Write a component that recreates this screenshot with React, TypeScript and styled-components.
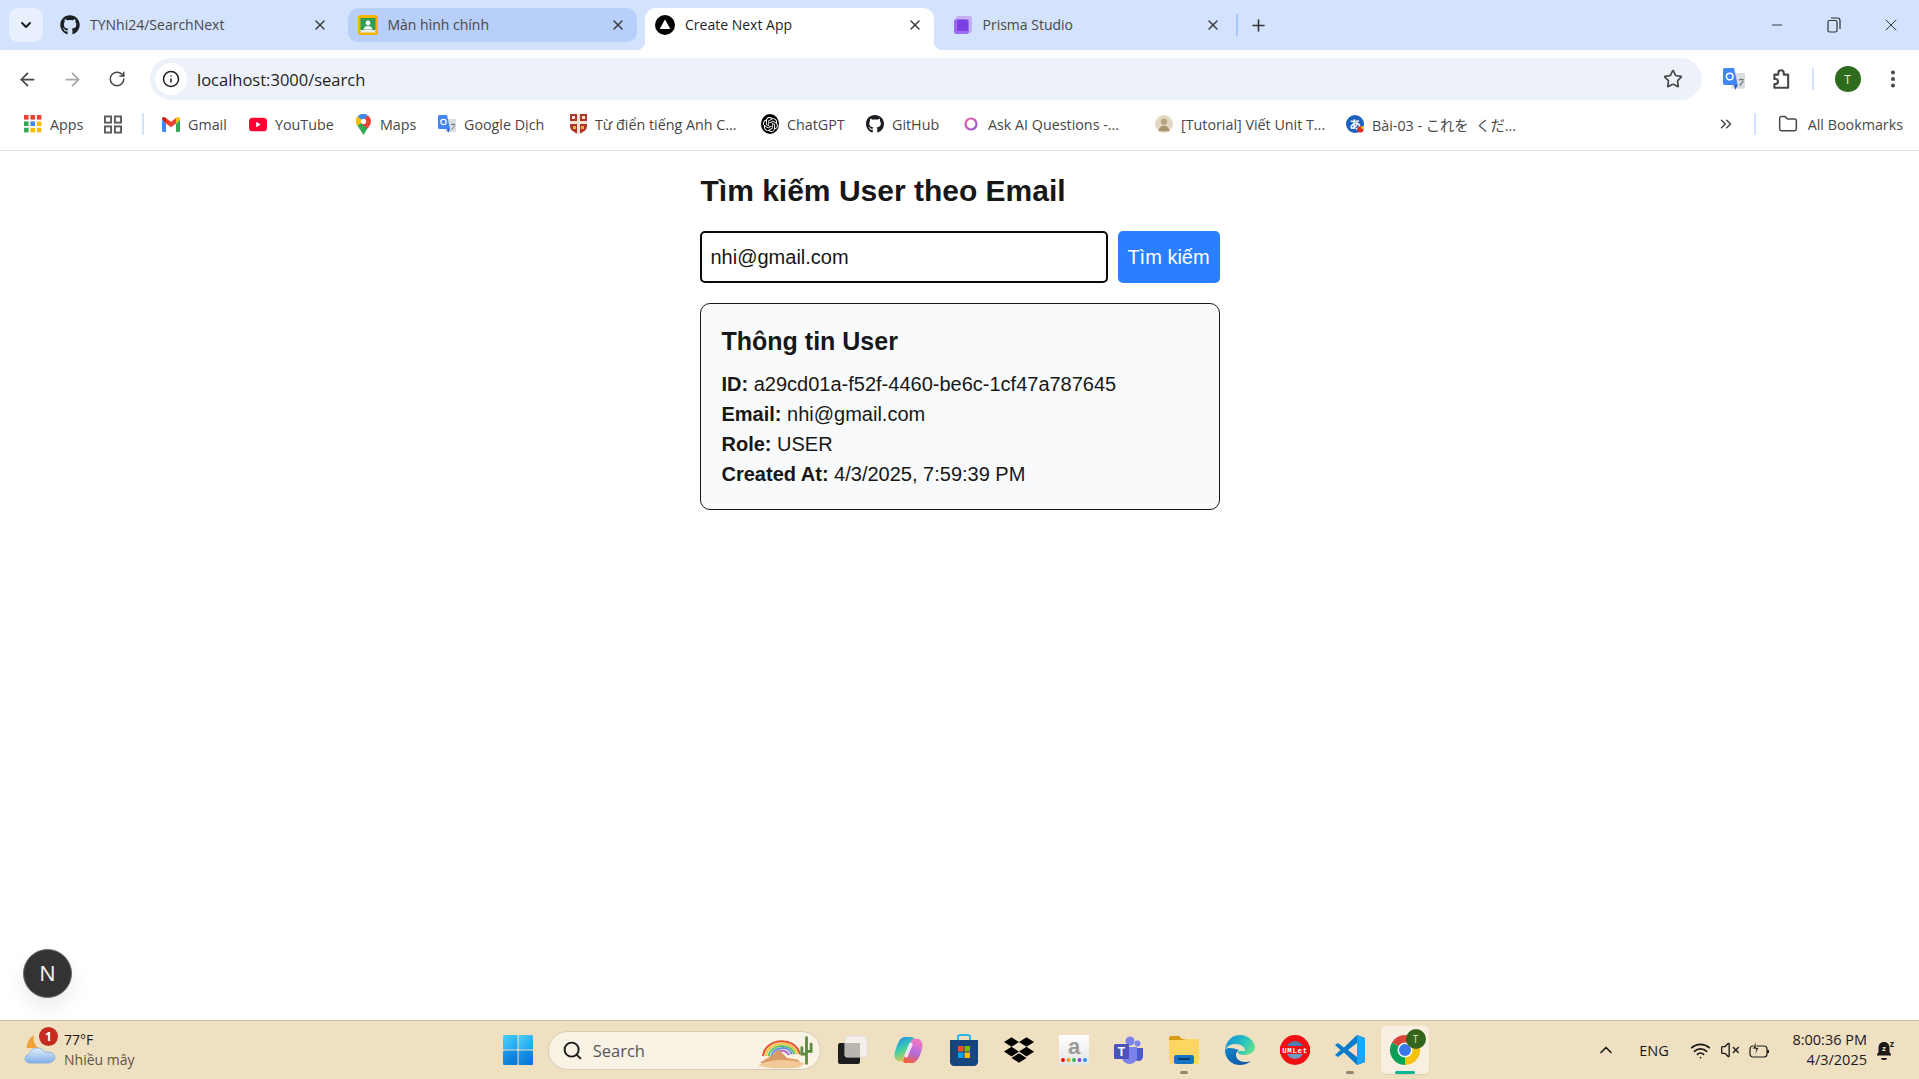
import React from 'react';
import styled, { createGlobalStyle } from 'styled-components';
import {
  ArrowLeft,
  ArrowRight,
  ChevronDown,
  ChevronUp,
  ChevronsRight,
  Folder,
  Info,
  Minus,
  MoreVertical,
  Plus,
  RotateCw,
  Search,
  Star,
  VolumeX,
  Wifi,
  X,
} from 'lucide-react';
import { FaDropbox, FaGithub } from 'react-icons/fa';
import { SiOpenai } from 'react-icons/si';

const uiFont = `'Open Sans', 'Noto Sans', 'Noto Sans CJK JP', sans-serif`;

const GlobalStyle = createGlobalStyle`
  html, body {
    margin: 0;
    padding: 0;
    height: 100%;
    background: #fff;
  }
  * {
    box-sizing: border-box;
  }
`;

const Page = styled.div`
  display: flex;
  flex-direction: column;
  width: 100%;
  height: 100vh;
  overflow: hidden;
  font-family: ${uiFont};
`;

/* ---------- tab strip ---------- */

const TabStrip = styled.div`
  display: flex;
  align-items: flex-start;
  height: 50px;
  padding: 8px 0 0 9px;
  background: #d3e3fd;
  flex-shrink: 0;
`;

const TabSearch = styled.div`
  display: flex;
  align-items: center;
  justify-content: center;
  width: 34px;
  height: 34px;
  margin-right: 7px;
  border-radius: 9px;
  background: #e9f0fd;
  color: #1f1f1f;
`;

const Tab = styled.div<{ $active?: boolean; $hover?: boolean }>`
  position: relative;
  display: flex;
  align-items: center;
  width: 289px;
  height: ${({ $active }) => ($active ? '42px' : '34px')};
  margin-right: 8.5px;
  padding: ${({ $active }) => ($active ? '0 12px 8px 10px' : '0 12px 0 10px')};
  border-radius: ${({ $active }) => ($active ? '11px 11px 0 0' : '10px')};
  background: ${({ $active, $hover }) =>
    $active ? '#fff' : $hover ? '#b7cff9' : 'transparent'};
  color: ${({ $active }) => ($active ? '#1f1f1f' : '#474747')};

  ${({ $active }) =>
    $active &&
    `
    &::before, &::after {
      content: '';
      position: absolute;
      bottom: 0;
      width: 9px;
      height: 9px;
    }
    &::before {
      left: -9px;
      background: radial-gradient(circle at 0 0, transparent 9px, #fff 9.5px);
    }
    &::after {
      right: -9px;
      background: radial-gradient(circle at 100% 0, transparent 9px, #fff 9.5px);
    }
  `}
`;

const TabFavicon = styled.span`
  display: flex;
  align-items: center;
  justify-content: center;
  width: 20px;
  height: 20px;
  flex-shrink: 0;
`;

const TabTitle = styled.span`
  flex: 1;
  margin-left: 10px;
  font-size: 14px;
  line-height: 20px;
  white-space: nowrap;
`;

const TabClose = styled(X)`
  margin-right: -1px;
  color: #3c3c3c;
`;

const TabDivider = styled.div`
  width: 1.5px;
  height: 22px;
  margin: 6px 0 0 -4px;
  background: #a8c7fa;
`;

const NewTab = styled.div`
  display: flex;
  align-items: center;
  justify-content: center;
  width: 22px;
  height: 34px;
  margin-left: 10px;
  color: #333;
`;

const WindowControls = styled.div`
  display: flex;
  align-items: center;
  height: 34px;
  margin-left: auto;
  color: #333;
`;

const WindowButton = styled.div`
  display: flex;
  align-items: center;
  justify-content: center;
  width: 57px;
  height: 34px;
`;

/* ---------- toolbar ---------- */

const Toolbar = styled.div`
  display: flex;
  align-items: center;
  height: 53px;
  padding: 5px 0 0 9px;
  border-radius: 12px 12px 0 0;
  background: #fff;
  flex-shrink: 0;
`;

const NavButton = styled.div<{ $muted?: boolean }>`
  display: flex;
  align-items: center;
  justify-content: center;
  width: 36px;
  height: 36px;
  margin-right: 9px;
  color: ${({ $muted }) => ($muted ? '#a6a6a6' : '#474747')};
`;

const Omnibox = styled.div`
  display: flex;
  align-items: center;
  flex: 1;
  height: 42px;
  margin-left: 6px;
  padding: 0 19px 0 5px;
  border-radius: 21px;
  background: #ecf1fa;
`;

const SiteInfo = styled.div`
  display: flex;
  align-items: center;
  justify-content: center;
  width: 32px;
  height: 32px;
  border-radius: 50%;
  background: #fff;
  color: #1f1f1f;
`;

const UrlText = styled.span`
  flex: 1;
  margin-left: 10px;
  font-size: 16.5px;
  color: #1f1f1f;
`;

const ToolGroup = styled.div`
  display: flex;
  align-items: center;
  flex-shrink: 0;
  width: 217px;
  padding-left: 14px;
  color: #474747;
`;

const ToolSlot = styled.div<{ $before?: number }>`
  display: flex;
  align-items: center;
  justify-content: center;
  width: 36px;
  height: 36px;
  flex-shrink: 0;
  margin-left: ${({ $before = 0 }) => $before}px;
`;

const ToolDivider = styled.div`
  width: 1.5px;
  height: 22px;
  margin: 0 21px 0 13px;
  flex-shrink: 0;
  background: #d3e3fd;
`;

const Avatar = styled.div`
  display: flex;
  align-items: center;
  justify-content: center;
  width: 26px;
  height: 26px;
  flex-shrink: 0;
  border-radius: 50%;
  background: #2e6b1d;
  color: #e5f2dc;
  font-size: 12px;
`;

/* ---------- bookmarks ---------- */

const BookmarksBar = styled.div`
  display: flex;
  align-items: center;
  height: 48px;
  padding: 0 16px 5px 24px;
  border-bottom: 1.5px solid #e4e4e4;
  background: #fff;
  flex-shrink: 0;
`;

const Bookmark = styled.div<{ $w: number }>`
  display: flex;
  align-items: center;
  gap: 8px;
  width: ${({ $w }) => $w}px;
  flex-shrink: 0;
  font-size: 14.3px;
  color: #474747;
  white-space: nowrap;
`;

const BookmarkIcon = styled.span`
  display: flex;
  align-items: center;
  justify-content: center;
  width: 18px;
  height: 20px;
  flex-shrink: 0;
`;

const BookmarkDivider = styled.div<{ $before?: number; $after: number }>`
  width: 2px;
  height: 22px;
  margin-left: ${({ $before = 0 }) => $before}px;
  margin-right: ${({ $after }) => $after}px;
  background: #d3e3fd;
`;

const BookmarksEnd = styled.div`
  display: flex;
  align-items: center;
  margin-left: auto;
  color: #474747;
  font-size: 14.3px;
  white-space: nowrap;
`;

const AllBookmarksLabel = styled.span`
  margin-left: 10px;
`;

const GptMark = styled.span`
  display: flex;
  align-items: center;
  justify-content: center;
  width: 20px;
  height: 20px;
  border-radius: 50%;
  background: #000;
  color: #fff;
`;

/* ---------- page content ---------- */

const Main = styled.main`
  position: relative;
  flex: 1;
  padding: 20px 0;
  background: #fff;
  font-family: 'Liberation Sans', Arial, sans-serif;
  color: #171717;
`;

const Content = styled.div`
  width: 520px;
  margin: 0 auto;
`;

const Heading = styled.h1`
  margin: 0 0 20px;
  padding-left: 1px;
  font-size: 30px;
  line-height: 40px;
  font-weight: 700;
`;

const SearchRow = styled.form`
  display: flex;
  gap: 10px;
  margin-bottom: 20px;
`;

const EmailInput = styled.input`
  flex: 1;
  min-width: 0;
  height: 52px;
  padding: 0 9px;
  border: 2.5px solid #0a0a0a;
  border-radius: 5px;
  outline: none;
  background: #fff;
  font-family: inherit;
  font-size: 20px;
  color: #171717;
`;

const SubmitButton = styled.button`
  width: 102px;
  height: 52px;
  padding: 0;
  border: none;
  border-radius: 5px;
  background: #2b7fff;
  font-family: inherit;
  font-size: 20px;
  color: #fff;
`;

const UserCard = styled.section`
  padding: 20px 20px 20px 21px;
  border: 1.25px solid #171717;
  border-radius: 10px;
  background: #f9fafb;
`;

const CardTitle = styled.h2`
  margin: 0 0 10px;
  font-size: 25px;
  line-height: 35px;
  font-weight: 700;
`;

const CardRow = styled.p`
  margin: 0;
  font-size: 20px;
  line-height: 30px;

  strong {
    font-weight: 700;
  }
`;

const DevBadge = styled.div`
  position: absolute;
  left: 23px;
  bottom: 22px;
  display: flex;
  align-items: center;
  justify-content: center;
  width: 49px;
  height: 49px;
  border: 1.5px solid #6a6a6a;
  border-radius: 50%;
  background: #333;
  box-shadow: 0 10px 20px rgba(0, 0, 0, 0.08);
  color: #eee;
  font-family: 'Liberation Sans', sans-serif;
  font-size: 22px;
`;

/* ---------- taskbar ---------- */

const Taskbar = styled.footer`
  display: grid;
  grid-template-columns: 490px auto 1fr;
  align-items: center;
  height: 59px;
  border-top: 1.5px solid #c9bda5;
  background: #f0e0c2;
  flex-shrink: 0;
`;

const Weather = styled.div`
  position: relative;
  display: flex;
  align-items: center;
  gap: 7px;
  padding-left: 23px;
`;

const WeatherBadge = styled.span`
  position: absolute;
  left: 39px;
  top: -3px;
  display: flex;
  align-items: center;
  justify-content: center;
  width: 19px;
  height: 19px;
  border-radius: 50%;
  background: #c42b1c;
  color: #fff;
  font-size: 12px;
  font-weight: 700;
`;

const WeatherText = styled.div`
  display: flex;
  flex-direction: column;
  font-size: 14px;
  line-height: 20px;
`;

const Temperature = styled.span`
  color: #1b1a19;
`;

const Condition = styled.span`
  color: #5c5549;
`;

const TaskCenter = styled.div`
  display: flex;
  align-items: center;
`;

const TaskIcon = styled.div<{ $active?: boolean }>`
  position: relative;
  display: flex;
  align-items: center;
  justify-content: center;
  width: ${({ $active }) => ($active ? '48px' : '55.2px')};
  height: 48px;
  margin: ${({ $active }) => ($active ? '0 3px' : '0')};
  border-radius: 5px;
  background: ${({ $active }) => ($active ? '#f8efe0' : 'transparent')};
  box-shadow: ${({ $active }) => ($active ? '0 1px 1px rgba(0,0,0,0.08)' : 'none')};
`;

const RunDot = styled.span<{ $active?: boolean }>`
  position: absolute;
  bottom: 0;
  left: 50%;
  width: ${({ $active }) => ($active ? '20px' : '8px')};
  height: 3.5px;
  border-radius: 2px;
  transform: translateX(-50%);
  background: ${({ $active }) => ($active ? '#0bb592' : '#8f8674')};
`;

const SearchPill = styled.div`
  display: flex;
  align-items: center;
  width: 273px;
  height: 39px;
  margin: 0 5px 0 2.5px;
  padding: 0 0 0 13px;
  border: 1px solid #d9ccb4;
  border-radius: 20px;
  background: #f9f3e6;
  color: #1c1c1c;
`;

const SearchLabel = styled.span`
  flex: 1;
  margin-left: 10px;
  font-size: 16.5px;
  color: #555;
`;

const Tray = styled.div`
  display: flex;
  align-items: center;
  justify-content: flex-end;
  padding-right: 23px;
  color: #1b1a19;
`;

const TraySlot = styled.div`
  display: flex;
  align-items: center;
  justify-content: center;
  width: 30px;
  height: 30px;
`;

const TrayLang = styled.span`
  width: 56px;
  margin: 0 3px 0 10px;
  text-align: center;
  font-size: 14.5px;
`;

const Clock = styled.div`
  display: flex;
  flex-direction: column;
  align-items: flex-end;
  width: 92px;
  margin-right: 9px;
  font-size: 14.5px;
  line-height: 20px;
  white-space: nowrap;
`;

/* ---------- drawn icons ---------- */

const NextLogo = () => (
  <svg width="20" height="20" viewBox="0 0 20 20">
    <circle cx="10" cy="10" r="10" fill="#000" />
    <path d="M10 4.600 15.400 14H4.600Z" fill="#fff" />
  </svg>
);

const ClassroomLogo = () => (
  <svg width="20" height="20" viewBox="0 0 20 20">
    <rect width="20" height="20" rx="2.500" fill="#f4b400" />
    <rect x="2.500" y="3" width="15" height="14" fill="#2f9e58" />
    <circle cx="10" cy="8" r="2.400" fill="#fff" />
    <path d="M5.500 14.500c.4-2.600 2.200-3.600 4.500-3.600s4.100 1 4.500 3.600Z" fill="#fff" />
    <rect x="2.500" y="15" width="15" height="2.500" fill="#e8eaed" />
  </svg>
);

const PrismaLogo = () => (
  <svg width="20" height="20" viewBox="0 0 20 20">
    <rect x="3" y="1" width="16" height="17" rx="2.500" fill="#c3b1f2" />
    <rect x="1" y="4" width="15" height="15" rx="2.500" fill="#9d6cf0" />
    <rect x="4" y="5" width="11" height="11" rx="1.500" fill="#7b3fe4" />
  </svg>
);

const AppsGrid = () => {
  const colors = ['#ea4335', '#ea4335', '#ea4335', '#34a853', '#4285f4', '#fbbc05', '#34a853', '#fbbc05', '#fbbc05'];
  return (
    <svg width="18" height="18" viewBox="0 0 18 18">
      {colors.map((c, i) => (
        <rect key={i} x={(i % 3) * 6.4} y={Math.floor(i / 3) * 6.4} width="4.600" height="4.600" fill={c} />
      ))}
    </svg>
  );
};

const TabGroups = () => (
  <svg width="19" height="19" viewBox="0 0 19 19" fill="none" stroke="#5b5b5b" strokeWidth="2">
    <rect x="1" y="1" width="6.500" height="6.500" />
    <rect x="11.500" y="1" width="6.500" height="6.500" />
    <rect x="1" y="11.500" width="6.500" height="6.500" />
    <rect x="11.500" y="11.500" width="6.500" height="6.500" />
  </svg>
);

const GmailLogo = () => (
  <svg width="18" height="15" viewBox="0 0 18 15">
    <path d="M0 2.500V13.500C0 14.300.7 15 1.500 15H4V6.500Z" fill="#4285f4" />
    <path d="M14 6.500V15h2.500c.8 0 1.500-.7 1.500-1.500V2.500Z" fill="#34a853" />
    <path d="M14 1v5.500l4-4V2c0-1.600-1.900-2.500-3-1.500Z" fill="#fbbc04" />
    <path d="M4 6.500V1l5 3.800L14 1v5.500L9 10.300Z" fill="#ea4335" />
    <path d="M0 2v.5l4 4V1L3 .5C1.900-.5 0 .4 0 2Z" fill="#c5221f" />
  </svg>
);

const YoutubeLogo = () => (
  <svg width="20" height="15" viewBox="0 0 20 15">
    <rect width="20" height="15" rx="4" fill="#ff0033" />
    <path d="M8 4.400 13 7.500 8 10.600Z" fill="#fff" />
  </svg>
);

const MapsLogo = () => (
  <svg width="15" height="21" viewBox="0 0 15 21">
    <path d="M7.500 0C3.400 0 0 3.300 0 7.400c0 1.700.6 3 1.500 4.300L7.500 21l4-6.500Z" fill="#34a853" />
    <path d="M2 2.300 7.500 7.500l-6 4.200C.6 10.400 0 9.100 0 7.400 0 5.400.7 3.600 2 2.300Z" fill="#fbbc04" />
    <path d="M2 2.300C3.400.9 5.300 0 7.500 0c1.600 0 3 .5 4.200 1.300L7.500 7.500Z" fill="#4285f4" />
    <path d="M11.700 1.300C13.700 2.700 15 4.900 15 7.400c0 2.600-2 5.200-3.500 7.100L5 9.500Z" fill="#ea4335" />
    <circle cx="7.500" cy="7.400" r="2.600" fill="#fff" />
  </svg>
);

const TranslateLogo = ({ size = 18 }: { size?: number }) => (
  <svg width={size} height={size} viewBox="0 0 18 18">
    <rect x="7" y="4" width="11" height="13" rx="1" fill="#dadce0" />
    <path d="M0 1.500C0 .7.700 0 1.500 0H9l3 14H1.500C.7 14 0 13.300 0 12.500Z" fill="#4285f4" />
    <path d="M9 14h3l-2 4Z" fill="#2a56c6" />
    <circle cx="5.500" cy="7" r="2.700" fill="none" stroke="#fff" strokeWidth="1.200" />
    <path d="M13 9.500h4M15 8.500v1M13.700 14.500l3-4" stroke="#777" strokeWidth="1" />
  </svg>
);

const CambridgeLogo = () => (
  <svg width="17" height="20" viewBox="0 0 17 20">
    <path d="M0 0h17v12c0 4-4 6.500-8.500 8C4 18.500 0 16 0 12Z" fill="#b0332c" />
    <path d="M7 0h3v20H7ZM0 7h17v3H0Z" fill="#f1e4d2" />
    <rect x="2" y="2" width="3" height="3" fill="#f1e4d2" />
    <rect x="12" y="2" width="3" height="3" fill="#f1e4d2" />
    <rect x="3" y="12" width="3" height="3" fill="#e5b440" />
    <rect x="11" y="12" width="3" height="3" fill="#e5b440" />
  </svg>
);

const AskAiLogo = () => (
  <svg width="16" height="16" viewBox="0 0 16 16">
    <defs>
      <linearGradient id="askRing" x1="0" y1="0" x2="1" y2="1">
        <stop offset="0" stopColor="#ec5fa6" />
        <stop offset="1" stopColor="#8f5fd6" />
      </linearGradient>
    </defs>
    <circle cx="8" cy="8" r="5.500" fill="none" stroke="url(#askRing)" strokeWidth="2.200" />
  </svg>
);

const TutorialLogo = () => (
  <svg width="20" height="20" viewBox="0 0 20 20">
    <circle cx="10" cy="10" r="10" fill="#e3d9c3" />
    <circle cx="10" cy="7.500" r="3.500" fill="#b9a684" />
    <path d="M4 18c.5-4.500 3-6 6-6s5.500 1.500 6 6Z" fill="#a8966f" />
  </svg>
);

const JapaneseLogo = () => (
  <svg width="20" height="20" viewBox="0 0 20 20">
    <circle cx="10" cy="10" r="10" fill="#1f5fbf" />
    <text x="10" y="15" textAnchor="middle" fontSize="13" fontWeight="700" fill="#fff" fontFamily="'Noto Sans CJK JP', sans-serif">
      あ
    </text>
    <circle cx="16" cy="16" r="3.500" fill="#d93025" />
    <circle cx="18" cy="14" r="1.500" fill="#fbbc05" />
  </svg>
);

const ExtensionIcon = () => (
  <svg width="22" height="22" viewBox="0 0 20 20" fill="none" stroke="#474747" strokeWidth="1.900" strokeLinejoin="round">
    <path d="M4 6h3.500V4.500a2.500 2.500 0 0 1 5 0V6H16.500v12H4v-3.500h1a2.200 2.200 0 0 0 0-4.500H4Z" />
  </svg>
);

const RestoreIcon = () => (
  <svg width="14" height="16" viewBox="0 0 14 16" fill="none" stroke="#333" strokeWidth="1.200">
    <rect x="1" y="3.500" width="9" height="11.500" rx="1.500" />
    <path d="M4 1h6.500C12 1 13 2 13 3.500V12" />
  </svg>
);

const WindowsLogo = () => (
  <svg width="30" height="30" viewBox="0 0 30 30">
    <defs>
      <linearGradient id="winTop" x1="0" y1="0" x2="1" y2="1">
        <stop offset="0" stopColor="#4fd0fb" />
        <stop offset="1" stopColor="#1ba1ec" />
      </linearGradient>
      <linearGradient id="winBottom" x1="0" y1="0" x2="1" y2="1">
        <stop offset="0" stopColor="#1a9bea" />
        <stop offset="1" stopColor="#0a72cf" />
      </linearGradient>
    </defs>
    <rect x="0" y="0" width="14.500" height="14.500" rx="1" fill="url(#winTop)" />
    <rect x="15.500" y="0" width="14.500" height="14.500" rx="1" fill="url(#winTop)" />
    <rect x="0" y="15.500" width="14.500" height="14.500" rx="1" fill="url(#winBottom)" />
    <rect x="15.500" y="15.500" width="14.500" height="14.500" rx="1" fill="url(#winBottom)" />
  </svg>
);

const WeatherIcon = () => (
  <svg width="34" height="36" viewBox="0 0 34 36">
    <defs>
      <linearGradient id="cloudFill" x1="0" y1="0" x2="0" y2="1">
        <stop offset="0" stopColor="#e6f0fb" />
        <stop offset="1" stopColor="#7fb0e8" />
      </linearGradient>
    </defs>
    <path d="M11 3c-1 4 0 9 4 13H3.500C4 11 6 6 11 3Z" fill="#f0a23a" />
    <path d="M7 31c-3 0-5-1.800-5-4.200 0-2.300 1.800-4 4-4.200C7 19 10 16 14.500 16c3.500 0 6.200 1.700 7.500 4.500.8-.3 1.700-.4 2.500-.4 4 0 7.500 2.300 7.500 5.400S28.500 31 24.500 31Z" fill="url(#cloudFill)" stroke="#7fa9dd" strokeWidth=".8" />
  </svg>
);

const DesertArt = () => (
  <svg width="64" height="37" viewBox="0 0 64 40">
    <g fill="none" strokeWidth="2.200">
      <path d="M5 26C7 7 39 3 45 24" stroke="#e4552f" />
      <path d="M8 26C10 10 37 7 42 24" stroke="#f3c23d" />
      <path d="M11 26C13 13 35 11 39 24" stroke="#5ec26a" />
      <path d="M14 26C16 16 33 14 36 24" stroke="#5b8fe0" />
      <path d="M17 26C19 19 30 18 33 25" stroke="#b36ad1" />
    </g>
    <path d="M2 33 16 24l6-5 9 9 12 2 4 6H8Z" fill="#d99b63" />
    <path d="M0 36c10-6 30-8 50-2l-6 4c-14 2-34 2-44-2Z" fill="#f1c898" />
    <path d="M52 6v28M47 17v7h5M57 13v8h-5" stroke="#5c8a3c" strokeWidth="3" fill="none" strokeLinecap="round" />
  </svg>
);

const TaskViewIcon = () => (
  <svg width="30" height="30" viewBox="0 0 30 30">
    <rect x="0" y="8" width="22" height="21" rx="2" fill="#1c1c1c" />
    <rect x="7" y="1" width="22" height="21" rx="2" fill="#f4f1ec" fillOpacity=".9" stroke="#ddd" />
    <rect x="7" y="8" width="15" height="14" fill="#b9b6b1" />
  </svg>
);

const CopilotIcon = () => (
  <svg width="29" height="28" viewBox="0 0 30 30">
    <defs>
      <linearGradient id="copilotLeft" x1="0.2" y1="0" x2="0.6" y2="1">
        <stop offset="0" stopColor="#1f8cf0" />
        <stop offset=".5" stopColor="#3fd0a8" />
        <stop offset="1" stopColor="#f6c83f" />
      </linearGradient>
      <linearGradient id="copilotRight" x1="0.6" y1="0" x2="0.3" y2="1">
        <stop offset="0" stopColor="#f07ac0" />
        <stop offset=".55" stopColor="#b36be0" />
        <stop offset="1" stopColor="#f2603a" />
      </linearGradient>
    </defs>
    <path d="M11 1h7c2 0 3 1 3 3L14 24c-1 2.500-3 3.500-5 3H5c-3-.5-5-3-5-6 0-3 3-14 6-17 1.500-2 3-3 5-3Z" fill="url(#copilotLeft)" />
    <path d="M19 29h-7c-2 0-3-1-2.500-3L17 7c1-3 3-4 5-4h3c3 .5 5 4 5 7 0 3-3 14-6 16-1.500 2-3 3-5 3Z" fill="url(#copilotRight)" />
    <path d="M17.500 9l-5 12" stroke="#fff" strokeOpacity=".8" strokeWidth="4" strokeLinecap="round" />
  </svg>
);

const StoreIcon = () => (
  <svg width="28" height="32" viewBox="0 0 28 32">
    <path d="M8 7V3c0-1 .8-2 2-2h8c1.200 0 2 1 2 2v4" fill="none" stroke="#2fb5e8" strokeWidth="2" />
    <path d="M0 6h28v22c0 2.200-1.800 4-4 4H4c-2.200 0-4-1.800-4-4Z" fill="#17467e" />
    <rect x="8" y="12" width="5.500" height="5.500" fill="#f25022" />
    <rect x="14.500" y="12" width="5.500" height="5.500" fill="#7fba00" />
    <rect x="8" y="18.500" width="5.500" height="5.500" fill="#00a4ef" />
    <rect x="14.500" y="18.500" width="5.500" height="5.500" fill="#ffb900" />
  </svg>
);

const AmazonIcon = () => {
  const dots = ['#f00', '#f59a23', '#2fb34a', '#8a3fe0', '#1e90e8'];
  return (
    <svg width="30" height="30" viewBox="0 0 30 30">
      <defs>
        <linearGradient id="amazonBg" x1="0" y1="0" x2="0" y2="1">
          <stop offset="0" stopColor="#fff" />
          <stop offset="1" stopColor="#e3e3e3" />
        </linearGradient>
      </defs>
      <rect width="30" height="30" fill="url(#amazonBg)" />
      <text x="15" y="19" textAnchor="middle" fontSize="22" fontWeight="700" fill="#9a9a9a" fontFamily="'Liberation Sans', sans-serif">
        a
      </text>
      {dots.map((c, i) => (
        <circle key={c} cx={4 + i * 5.5} cy="25" r="1.900" fill={c} />
      ))}
    </svg>
  );
};

const TeamsIcon = () => (
  <svg width="30" height="30" viewBox="0 0 30 30">
    <circle cx="23.500" cy="8.500" r="3" fill="#7b83eb" />
    <circle cx="16" cy="6" r="4.500" fill="#7b83eb" />
    <path d="M21 13h8v8c0 3-2 5-4.500 5-1.300 0-2.500-.5-3.500-1.500Z" fill="#5059c9" />
    <path d="M8 12h15v10c0 4-3.500 7-7.500 7S8 26 8 22Z" fill="#7b83eb" />
    <rect x="0" y="9" width="15" height="15" rx="1.500" fill="#4b53bc" />
    <text x="7.500" y="21" textAnchor="middle" fontSize="12" fontWeight="700" fill="#fff" fontFamily="'Liberation Sans', sans-serif">
      T
    </text>
  </svg>
);

const ExplorerIcon = () => (
  <svg width="30" height="28" viewBox="0 0 30 28">
    <path d="M0 2c0-1 1-2 2-2h8l3 3h15v5H0Z" fill="#d99a16" />
    <path d="M0 4h14l3-1h11c1 0 2 1 2 2v21c0 1-1 2-2 2H2c-1 0-2-1-2-2Z" fill="#fcd562" />
    <rect x="5" y="19" width="20" height="9" rx="2" fill="#1573c4" />
    <rect x="9" y="22" width="12" height="2" fill="#0b3d6e" />
  </svg>
);

const EdgeIcon = () => (
  <svg width="30" height="30" viewBox="0 0 30 30">
    <defs>
      <linearGradient id="edgeTop" x1="0" y1="0.2" x2="1" y2="0.6">
        <stop offset="0" stopColor="#1190d8" />
        <stop offset=".6" stopColor="#2cc3c0" />
        <stop offset="1" stopColor="#63e08a" />
      </linearGradient>
      <linearGradient id="edgeBottom" x1="0" y1="0" x2="1" y2="1">
        <stop offset="0" stopColor="#1186d0" />
        <stop offset="1" stopColor="#0c4f9c" />
      </linearGradient>
    </defs>
    <path d="M0 15C0 24 7 30 15 30c4 0 8-1.500 11-4-2 .8-4 1-6 1-5 0-9-3-9-7 0-2 1-4 3-5C8 13 2 12 0 15Z" fill="url(#edgeBottom)" />
    <path d="M15 0C7 0 1 6 0 15c2-4 6-6 10-6 6 0 10 3 10 7h-5c-2 0-3 1-2 2 1 1 3 2 6 2 5 0 11-3 11-7C30 6 23 0 15 0Z" fill="url(#edgeTop)" />
  </svg>
);

const UmletIcon = () => (
  <svg width="30" height="30" viewBox="0 0 30 30">
    <circle cx="15" cy="15" r="15" fill="#f10f13" />
    <path d="M6 15a9 9 0 0 1 18 0Z" fill="#4d7fb0" />
    <path d="M6 15a9 9 0 0 0 18 0Z" fill="#6d9cc7" />
    <rect x="0" y="11" width="30" height="8" fill="#f10f13" />
    <text x="15" y="18" textAnchor="middle" fontSize="7.500" fontWeight="700" letterSpacing=".6" fill="#fff" fontFamily="'Liberation Mono', monospace">
      UMLet
    </text>
  </svg>
);

const VscodeIcon = () => (
  <svg width="30" height="30" viewBox="0 0 30 30">
    <path fillRule="evenodd" d="M22 0 9 12.500 3 8 0 10l5.500 5L0 20l3 2 6-4.500L22 30l8-3V3ZM22 8v14l-9-7Z" fill="#0a7ccc" />
    <path d="M22 0 30 3V27L22 30Z" fill="#1ea5f2" />
  </svg>
);

const ChromeIcon = () => (
  <svg width="32" height="32" viewBox="0 0 32 32">
    <path d="M16 16 3 8.500A15 15 0 0 1 29 8.500Z" fill="#db4437" />
    <path d="M16 16 3 8.500A15 15 0 0 0 16 31Z" fill="#0f9d58" />
    <path d="M16 16 29 8.500A15 15 0 0 1 16 31Z" fill="#f4c20d" />
    <circle cx="16" cy="16" r="7.500" fill="#fff" />
    <circle cx="16" cy="16" r="6" fill="#3b78e7" />
  </svg>
);

const ProfileBadge = styled.span`
  position: absolute;
  right: 3px;
  top: 3px;
  display: flex;
  align-items: center;
  justify-content: center;
  width: 20px;
  height: 20px;
  border-radius: 50%;
  background: #35651d;
  color: #d9e8cc;
  font-size: 10px;
`;

const BatteryIcon = () => (
  <svg width="22" height="20" viewBox="0 0 22 20" fill="none" stroke="#1b1a19" strokeWidth="1.200">
    <rect x="1" y="6" width="17" height="11" rx="3" />
    <path d="M19 10v3" strokeWidth="2" />
    <path d="M7 1 3.500 9H7l-1.500 7L10 7.500H7Z" fill="#1b1a19" stroke="#f0e0c2" strokeWidth=".8" />
  </svg>
);

const SleepBellIcon = () => (
  <svg width="20" height="22" viewBox="0 0 20 22">
    <path d="M8 3c-3.500 0-5.500 2.500-5.500 6v4L1 15.500v1h14v-1L13.500 13V9C13.500 5.500 11.500 3 8 3Z" fill="#1b1a19" />
    <path d="M5 19h6a3 2 0 0 1-6 0Z" fill="#1b1a19" />
    <text x="8" y="12" textAnchor="middle" fontSize="8" fontWeight="700" fill="#f0e0c2" fontFamily="'Liberation Sans', sans-serif">
      z
    </text>
    <text x="16" y="8" textAnchor="middle" fontSize="9" fontWeight="700" fill="#1b1a19" fontFamily="'Liberation Sans', sans-serif">
      z
    </text>
  </svg>
);

/* ---------- data ---------- */

const bookmarks = [
  { label: 'Gmail', w: 87, icon: <GmailLogo /> },
  { label: 'YouTube', w: 105, icon: <YoutubeLogo /> },
  { label: 'Maps', w: 84, icon: <MapsLogo /> },
  { label: 'Google Dịch', w: 131, icon: <TranslateLogo /> },
  { label: 'Từ điển tiếng Anh C...', w: 192, icon: <CambridgeLogo /> },
  {
    label: 'ChatGPT',
    w: 105,
    icon: (
      <GptMark>
        <SiOpenai size={15} />
      </GptMark>
    ),
  },
  { label: 'GitHub', w: 96, icon: <FaGithub size={20} color="#1b1f23" /> },
  { label: 'Ask AI Questions -...', w: 193, icon: <AskAiLogo /> },
  { label: '[Tutorial] Viết Unit T...', w: 191, icon: <TutorialLogo /> },
  { label: 'Bài-03 - これを\u00a0\u00a0くだ...', w: 170, icon: <JapaneseLogo /> },
];

const taskApps = [
  { key: 'taskview', icon: <TaskViewIcon /> },
  { key: 'copilot', icon: <CopilotIcon /> },
  { key: 'store', icon: <StoreIcon /> },
  { key: 'dropbox', icon: <FaDropbox size={30} color="#000" /> },
  { key: 'amazon', icon: <AmazonIcon /> },
  { key: 'teams', icon: <TeamsIcon /> },
  { key: 'explorer', icon: <ExplorerIcon />, running: true },
  { key: 'edge', icon: <EdgeIcon /> },
  { key: 'umlet', icon: <UmletIcon /> },
  { key: 'vscode', icon: <VscodeIcon />, running: true },
];

export default function App() {
  return (
    <Page>
      <GlobalStyle />

      <TabStrip>
        <TabSearch>
          <ChevronDown size={16} strokeWidth={3} />
        </TabSearch>
        <Tab>
          <TabFavicon>
            <FaGithub size={20} color="#1b1f23" />
          </TabFavicon>
          <TabTitle>TYNhi24/SearchNext</TabTitle>
          <TabClose size={16} strokeWidth={2.2} />
        </Tab>
        <Tab $hover>
          <TabFavicon>
            <ClassroomLogo />
          </TabFavicon>
          <TabTitle>Màn hình chính</TabTitle>
          <TabClose size={16} strokeWidth={2.2} />
        </Tab>
        <Tab $active>
          <TabFavicon>
            <NextLogo />
          </TabFavicon>
          <TabTitle>Create Next App</TabTitle>
          <TabClose size={16} strokeWidth={2.2} />
        </Tab>
        <Tab>
          <TabFavicon>
            <PrismaLogo />
          </TabFavicon>
          <TabTitle>Prisma Studio</TabTitle>
          <TabClose size={16} strokeWidth={2.2} />
        </Tab>
        <TabDivider />
        <NewTab>
          <Plus size={19} strokeWidth={2} />
        </NewTab>
        <WindowControls>
          <WindowButton>
            <Minus size={16} strokeWidth={1.4} />
          </WindowButton>
          <WindowButton>
            <RestoreIcon />
          </WindowButton>
          <WindowButton>
            <X size={20} strokeWidth={1.2} />
          </WindowButton>
        </WindowControls>
      </TabStrip>

      <Toolbar>
        <NavButton>
          <ArrowLeft size={21} strokeWidth={2} />
        </NavButton>
        <NavButton $muted>
          <ArrowRight size={21} strokeWidth={2} />
        </NavButton>
        <NavButton>
          <RotateCw size={18} strokeWidth={2} />
        </NavButton>
        <Omnibox>
          <SiteInfo>
            <Info size={18} strokeWidth={2} />
          </SiteInfo>
          <UrlText>localhost:3000/search</UrlText>
          <Star size={20} strokeWidth={2} color="#474747" />
        </Omnibox>
        <ToolGroup>
          <ToolSlot>
            <TranslateLogo size={22} />
          </ToolSlot>
          <ToolSlot $before={11}>
            <ExtensionIcon />
          </ToolSlot>
          <ToolDivider />
          <Avatar>T</Avatar>
          <ToolSlot $before={14}>
            <MoreVertical size={22} strokeWidth={2.4} />
          </ToolSlot>
        </ToolGroup>
      </Toolbar>

      <BookmarksBar>
        <Bookmark $w={80}>
          <BookmarkIcon>
            <AppsGrid />
          </BookmarkIcon>
          Apps
        </Bookmark>
        <Bookmark $w={38}>
          <BookmarkIcon>
            <TabGroups />
          </BookmarkIcon>
        </Bookmark>
        <BookmarkDivider $after={18} />
        {bookmarks.map((b) => (
          <Bookmark key={b.label} $w={b.w}>
            <BookmarkIcon>{b.icon}</BookmarkIcon>
            {b.label}
          </Bookmark>
        ))}
        <BookmarksEnd>
          <ChevronsRight size={18} strokeWidth={2} />
          <BookmarkDivider $before={19} $after={22} />
          <Folder size={20} strokeWidth={1.8} />
          <AllBookmarksLabel>All Bookmarks</AllBookmarksLabel>
        </BookmarksEnd>
      </BookmarksBar>

      <Main>
        <Content>
          <Heading>Tìm kiếm User theo Email</Heading>
          <SearchRow>
            <EmailInput type="email" defaultValue="nhi@gmail.com" />
            <SubmitButton type="button">Tìm kiếm</SubmitButton>
          </SearchRow>
          <UserCard>
            <CardTitle>Thông tin User</CardTitle>
            <CardRow>
              <strong>ID:</strong> a29cd01a-f52f-4460-be6c-1cf47a787645
            </CardRow>
            <CardRow>
              <strong>Email:</strong> nhi@gmail.com
            </CardRow>
            <CardRow>
              <strong>Role:</strong> USER
            </CardRow>
            <CardRow>
              <strong>Created At:</strong> 4/3/2025, 7:59:39 PM
            </CardRow>
          </UserCard>
        </Content>
        <DevBadge>N</DevBadge>
      </Main>

      <Taskbar>
        <Weather>
          <WeatherIcon />
          <WeatherBadge>1</WeatherBadge>
          <WeatherText>
            <Temperature>77°F</Temperature>
            <Condition>Nhiều mây</Condition>
          </WeatherText>
        </Weather>

        <TaskCenter>
          <TaskIcon>
            <WindowsLogo />
          </TaskIcon>
          <SearchPill>
            <Search size={21} strokeWidth={2.2} />
            <SearchLabel>Search</SearchLabel>
            <DesertArt />
          </SearchPill>
          {taskApps.map((app) => (
            <TaskIcon key={app.key}>
              {app.icon}
              {app.running && <RunDot />}
            </TaskIcon>
          ))}
          <TaskIcon $active>
            <ChromeIcon />
            <ProfileBadge>T</ProfileBadge>
            <RunDot $active />
          </TaskIcon>
        </TaskCenter>

        <Tray>
          <ChevronUp size={20} strokeWidth={2} />
          <TrayLang>ENG</TrayLang>
          <TraySlot>
            <Wifi size={21} strokeWidth={2} />
          </TraySlot>
          <TraySlot>
            <VolumeX size={20} strokeWidth={1.6} />
          </TraySlot>
          <TraySlot>
            <BatteryIcon />
          </TraySlot>
          <Clock>
            <span>8:00:36 PM</span>
            <span>4/3/2025</span>
          </Clock>
          <SleepBellIcon />
        </Tray>
      </Taskbar>
    </Page>
  );
}
